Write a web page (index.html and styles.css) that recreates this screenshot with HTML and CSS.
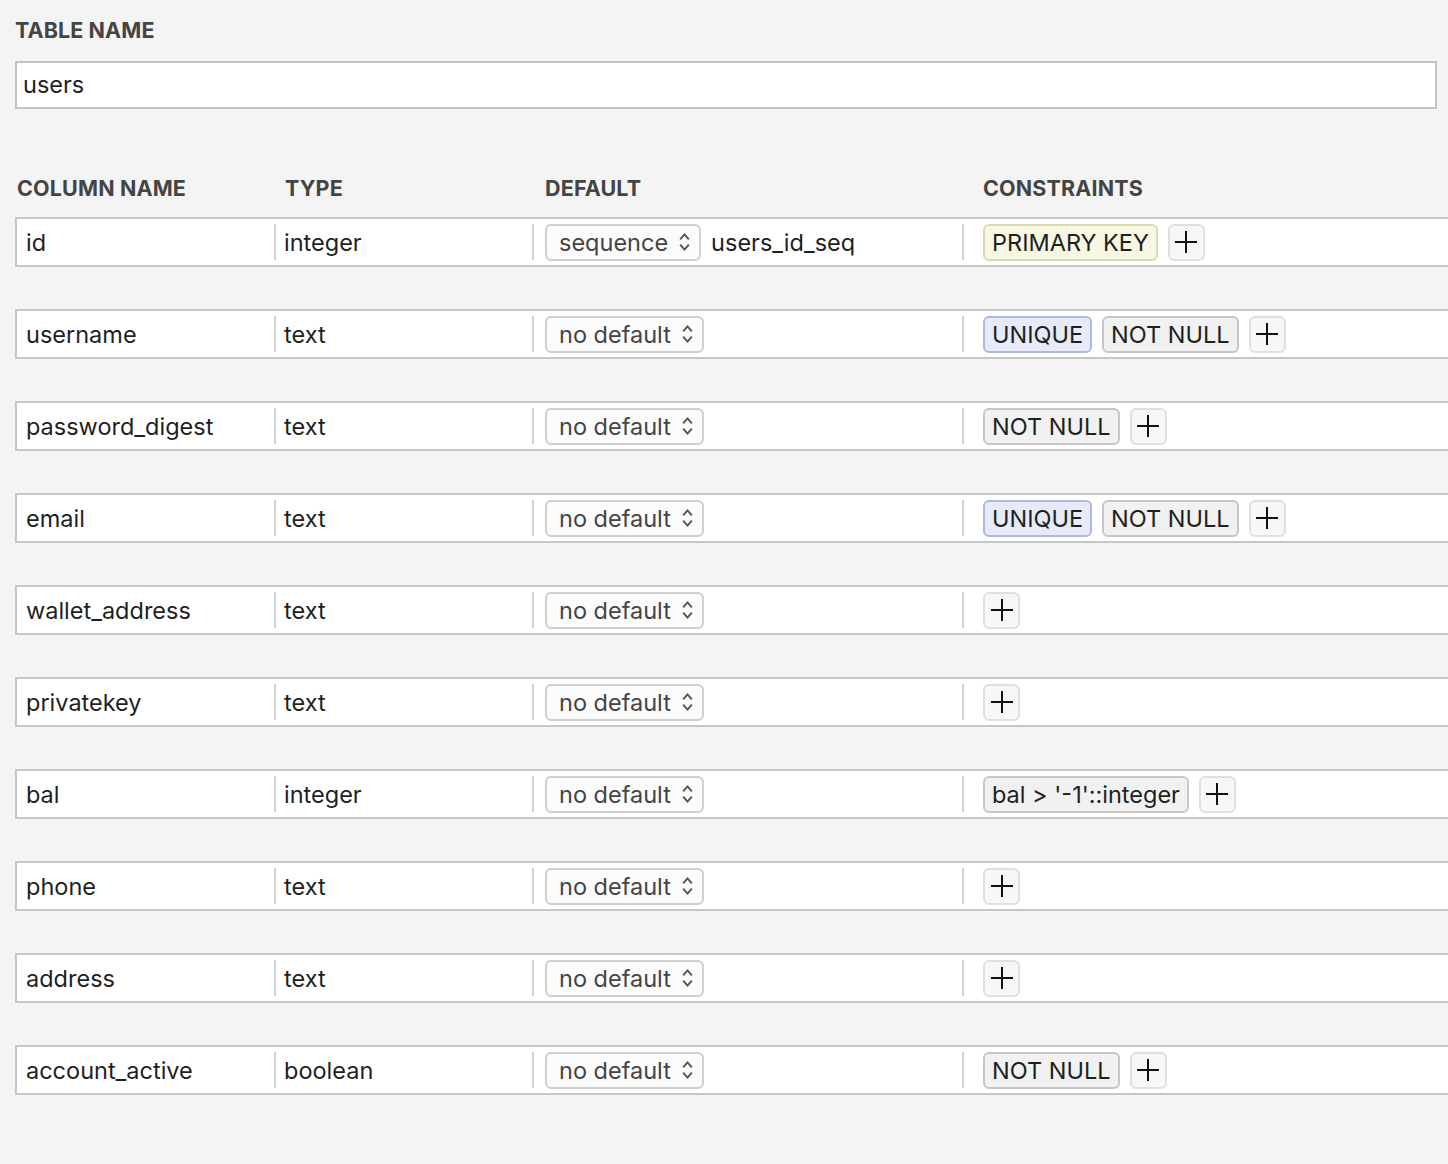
FILE: index.html
```html
<!DOCTYPE html>
<html>
<head>
<meta charset="utf-8">
<link rel="stylesheet" href="styles.css">
</head>
<body>
<div class="page">
  <div class="label">TABLE NAME</div>
  <div class="name-input">users</div>

  <div class="grid head">
    <div class="hc c1">COLUMN NAME</div>
    <div class="hc c2">TYPE</div>
    <div class="hc c3">DEFAULT</div>
    <div class="hc c4">CONSTRAINTS</div>
  </div>

  <div class="rows">
    <div class="grid row">
      <div class="cell c1">id</div>
      <div class="cell c2 div">integer</div>
      <div class="cell c3 div"><span class="sel">sequence<svg class="chev" viewBox="0 0 12 20"><path d="M2 7.5 L6 3 L10 7.5 M2 12.5 L6 17 L10 12.5"/></svg></span><span class="seq">users_id_seq</span></div>
      <div class="cell c4 div"><span class="badge pk">PRIMARY KEY</span><span class="plus"><svg viewBox="0 0 24 24"><path d="M12 1 V23 M1 12 H23"/></svg></span></div>
    </div>
    <div class="grid row">
      <div class="cell c1">username</div>
      <div class="cell c2 div">text</div>
      <div class="cell c3 div"><span class="sel">no default<svg class="chev" viewBox="0 0 12 20"><path d="M2 7.5 L6 3 L10 7.5 M2 12.5 L6 17 L10 12.5"/></svg></span></div>
      <div class="cell c4 div"><span class="badge uq">UNIQUE</span><span class="badge nn">NOT NULL</span><span class="plus"><svg viewBox="0 0 24 24"><path d="M12 1 V23 M1 12 H23"/></svg></span></div>
    </div>
    <div class="grid row">
      <div class="cell c1">password_digest</div>
      <div class="cell c2 div">text</div>
      <div class="cell c3 div"><span class="sel">no default<svg class="chev" viewBox="0 0 12 20"><path d="M2 7.5 L6 3 L10 7.5 M2 12.5 L6 17 L10 12.5"/></svg></span></div>
      <div class="cell c4 div"><span class="badge nn">NOT NULL</span><span class="plus"><svg viewBox="0 0 24 24"><path d="M12 1 V23 M1 12 H23"/></svg></span></div>
    </div>
    <div class="grid row">
      <div class="cell c1">email</div>
      <div class="cell c2 div">text</div>
      <div class="cell c3 div"><span class="sel">no default<svg class="chev" viewBox="0 0 12 20"><path d="M2 7.5 L6 3 L10 7.5 M2 12.5 L6 17 L10 12.5"/></svg></span></div>
      <div class="cell c4 div"><span class="badge uq">UNIQUE</span><span class="badge nn">NOT NULL</span><span class="plus"><svg viewBox="0 0 24 24"><path d="M12 1 V23 M1 12 H23"/></svg></span></div>
    </div>
    <div class="grid row">
      <div class="cell c1">wallet_address</div>
      <div class="cell c2 div">text</div>
      <div class="cell c3 div"><span class="sel">no default<svg class="chev" viewBox="0 0 12 20"><path d="M2 7.5 L6 3 L10 7.5 M2 12.5 L6 17 L10 12.5"/></svg></span></div>
      <div class="cell c4 div"><span class="plus"><svg viewBox="0 0 24 24"><path d="M12 1 V23 M1 12 H23"/></svg></span></div>
    </div>
    <div class="grid row">
      <div class="cell c1">privatekey</div>
      <div class="cell c2 div">text</div>
      <div class="cell c3 div"><span class="sel">no default<svg class="chev" viewBox="0 0 12 20"><path d="M2 7.5 L6 3 L10 7.5 M2 12.5 L6 17 L10 12.5"/></svg></span></div>
      <div class="cell c4 div"><span class="plus"><svg viewBox="0 0 24 24"><path d="M12 1 V23 M1 12 H23"/></svg></span></div>
    </div>
    <div class="grid row">
      <div class="cell c1">bal</div>
      <div class="cell c2 div">integer</div>
      <div class="cell c3 div"><span class="sel">no default<svg class="chev" viewBox="0 0 12 20"><path d="M2 7.5 L6 3 L10 7.5 M2 12.5 L6 17 L10 12.5"/></svg></span></div>
      <div class="cell c4 div"><span class="badge ck">bal &gt; '-1'::integer</span><span class="plus"><svg viewBox="0 0 24 24"><path d="M12 1 V23 M1 12 H23"/></svg></span></div>
    </div>
    <div class="grid row">
      <div class="cell c1">phone</div>
      <div class="cell c2 div">text</div>
      <div class="cell c3 div"><span class="sel">no default<svg class="chev" viewBox="0 0 12 20"><path d="M2 7.5 L6 3 L10 7.5 M2 12.5 L6 17 L10 12.5"/></svg></span></div>
      <div class="cell c4 div"><span class="plus"><svg viewBox="0 0 24 24"><path d="M12 1 V23 M1 12 H23"/></svg></span></div>
    </div>
    <div class="grid row">
      <div class="cell c1">address</div>
      <div class="cell c2 div">text</div>
      <div class="cell c3 div"><span class="sel">no default<svg class="chev" viewBox="0 0 12 20"><path d="M2 7.5 L6 3 L10 7.5 M2 12.5 L6 17 L10 12.5"/></svg></span></div>
      <div class="cell c4 div"><span class="plus"><svg viewBox="0 0 24 24"><path d="M12 1 V23 M1 12 H23"/></svg></span></div>
    </div>
    <div class="grid row">
      <div class="cell c1">account_active</div>
      <div class="cell c2 div">boolean</div>
      <div class="cell c3 div"><span class="sel">no default<svg class="chev" viewBox="0 0 12 20"><path d="M2 7.5 L6 3 L10 7.5 M2 12.5 L6 17 L10 12.5"/></svg></span></div>
      <div class="cell c4 div"><span class="badge nn">NOT NULL</span><span class="plus"><svg viewBox="0 0 24 24"><path d="M12 1 V23 M1 12 H23"/></svg></span></div>
    </div>
  </div>
</div>
</body>
</html>
```

FILE: styles.css
```css
html, body {
  margin: 0;
  padding: 0;
  background: #f4f4f4;
  overflow: hidden;
}
body {
  font-family: "Inter", "Roboto", "Liberation Sans", sans-serif;
  color: #1f1f1f;
}
.page {
  padding: 17px 0 0 15px;
  width: 1460px;
}
.label {
  font-size: 21.5px;
  line-height: 26px;
  font-weight: 700;
  color: #444;
  letter-spacing: 0.1px;
}
.name-input {
  margin-top: 18px;
  height: 44px;
  border: 2px solid #c2c2c2;
  background: #fff;
  font-size: 23.5px;
  line-height: 44px;
  padding-left: 6px;
  box-sizing: content-box;
  width: 1412px;
}
.grid {
  display: grid;
  grid-template-columns: 257px 258px 430px 1fr;
}
.head {
  margin-top: 66px;
  padding-left: 2px;
}
.hc {
  font-size: 21.5px;
  line-height: 26px;
  font-weight: 700;
  color: #444;
  letter-spacing: 0.15px;
}
.hc.c1 { padding-left: 0; }
.hc.c2 { padding-left: 11px; }
.hc.c3 { padding-left: 13px; }
.hc.c4 { padding-left: 21px; }
.rows {
  margin-top: 16px;
  display: flex;
  flex-direction: column;
  gap: 42px;
}
.row {
  height: 46px;
  border: 2px solid #c6c6c6;
  border-right: none;
  background: #fff;
  align-items: center;
}
.cell {
  height: 36px;
  display: flex;
  align-items: center;
  font-size: 23.5px;
}
.cell.div {
  border-left: 2px solid #d2d2d2;
}
.cell.c1 { padding-left: 9px; }
.cell.c2 { padding-left: 8px; }
.cell.c3 { padding-left: 11px; }
.cell.c4 { padding-left: 19px; gap: 10px; }
.sel {
  box-sizing: border-box;
  height: 37px;
  border: 2px solid #cfcfcf;
  border-radius: 6px;
  background: #fbfbfb;
  color: #444;
  display: inline-flex;
  align-items: center;
  padding: 0 8px 0 12px;
  gap: 10px;
}
.chev {
  width: 13px;
  height: 22px;
  fill: none;
  stroke: #555;
  stroke-width: 1.8;
}
.seq {
  margin-left: 10px;
}
.badge {
  height: 37px;
  box-sizing: border-box;
  border: 2px solid #c8c8c8;
  border-radius: 6px;
  background: #f0f0f0;
  display: inline-flex;
  align-items: center;
  padding: 0 7px;
  color: #1f1f1f;
}
.badge.pk {
  background: #f8f7e2;
  border-color: #dcdab2;
}
.badge.uq {
  background: #e7eaf8;
  border-color: #aeb8df;
}
.badge.nn {
  background: #f1f1f1;
  border-color: #c6c6c6;
}
.badge.ck {
  background: #f1f1f1;
  border-color: #c8c8c8;
}
.plus {
  width: 37px;
  height: 37px;
  box-sizing: border-box;
  border: 2px solid #e0e0e0;
  border-radius: 6px;
  background: #f7f7f7;
  display: inline-flex;
  align-items: center;
  justify-content: center;
}
.plus svg {
  width: 24px;
  height: 24px;
  fill: none;
  stroke: #111;
  stroke-width: 2;
}
```
